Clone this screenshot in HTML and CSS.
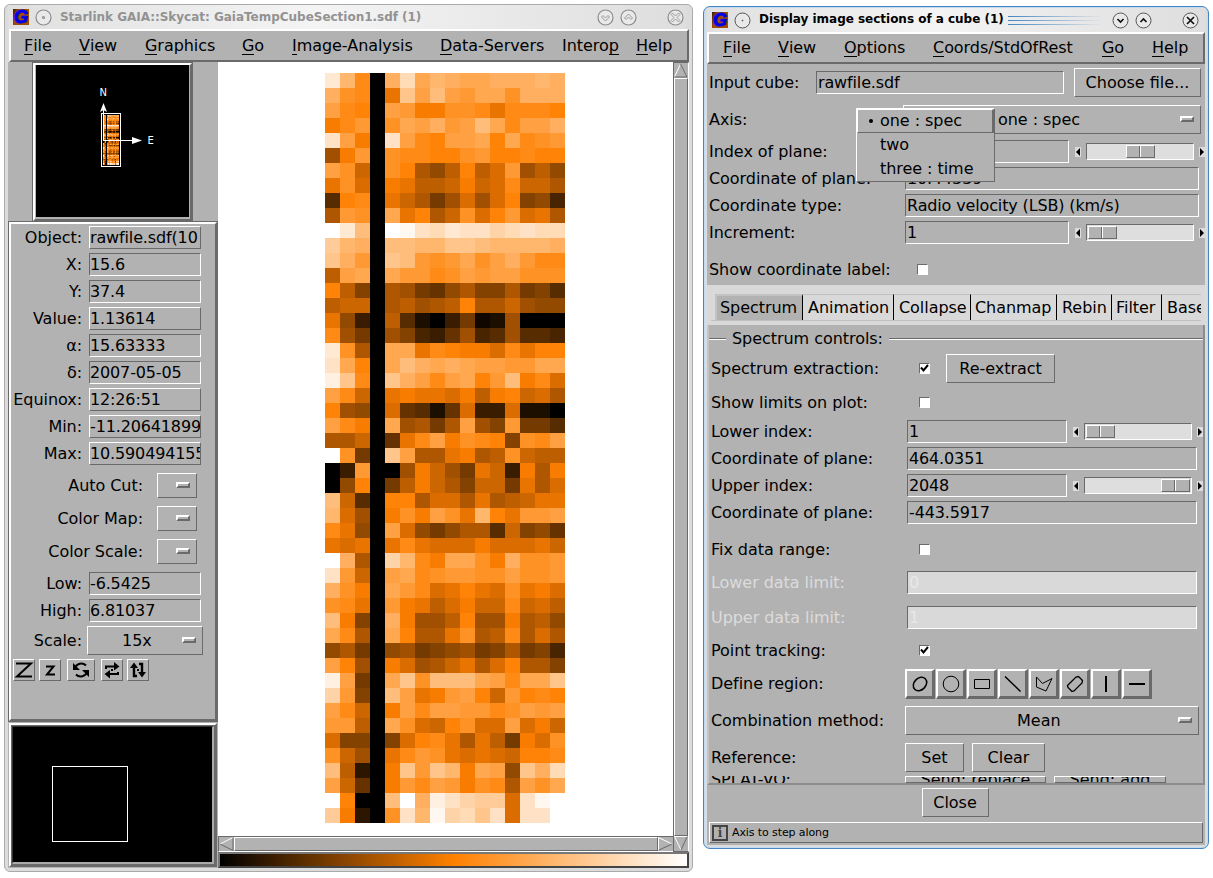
FILE: index.html
```html
<!DOCTYPE html>
<html lang="en">
<head>
<meta charset="utf-8">
<title>Starlink GAIA::Skycat</title>
<link rel="stylesheet" href="styles.css">
</head>
<body>
<section class="window main-window">
  <header class="titlebar">
    <span class="logo"><span>G</span></span>
    <svg class="knob" width="17" height="17" viewBox="0 0 17 17"><circle cx="8.5" cy="8.5" r="7.5"/><circle class="pin" cx="8.5" cy="8.5" r="1"/></svg>
    <h1>Starlink GAIA::Skycat: GaiaTempCubeSection1.sdf (1)</h1>
    <svg class="knob k1" width="17" height="17" viewBox="0 0 17 17"><circle cx="8.5" cy="8.5" r="7.5"/><path d="M4.5 8l4 4 4-4-1.500-1.500-2.500 2.500-2.500-2.500z"/></svg>
    <svg class="knob k2" width="17" height="17" viewBox="0 0 17 17"><circle cx="8.500" cy="8.500" r="7.500"/><path d="M4.500 9l4-4 4 4-1.500 1.500-2.500-2.500-2.500 2.500z"/></svg>
    <svg class="knob k3" width="17" height="17" viewBox="0 0 17 17"><circle cx="8.500" cy="8.500" r="7.500"/><path d="M4 5.500l1.500-1.500 3 3 3-3 1.500 1.500-3 3 3 3-1.500 1.500-3-3-3 3-1.500-1.500 3-3z"/></svg>
  </header>
  <nav class="menubar main-menu">
    <span><u>F</u>ile</span><span><u>V</u>iew</span><span><u>G</u>raphics</span><span><u>G</u>o</span><span><u>I</u>mage-Analysis</span><span><u>D</u>ata-Servers</span><span>Intero<u>p</u></span><span><u>H</u>elp</span>
  </nav>
  <div class="main-body">
    <aside class="side">
      <div class="pan-wrap">
        <div class="pan">
          <svg width="153" height="152" viewBox="0 0 153 152">
            <rect width="153" height="152" fill="#000"/>
            <svg id="thumb" x="67" y="50" width="16" height="50" viewBox="0 0 240 750" preserveAspectRatio="none"><use href="#cells"/></svg>
            <rect x="65.500" y="48.500" width="19" height="53" fill="none" stroke="#fff"/>
            <path d="M67.500 75.500V44M67.500 75.500H97" stroke="#fff" fill="none"/>
            <path d="M67.500 38l3.500 9-3.500-2-3.500 2zM96 72l10 3.500-10 3.500z" fill="#fff"/>
            <text x="63.500" y="31">N</text><text x="111.500" y="79">E</text>
          </svg>
        </div>
      </div>
      <div class="info">
        <div class="irow"><label>Object:</label><b class="raised">rawfile.sdf(10</b></div>
        <div class="irow"><label>X:</label><b>15.6</b></div>
        <div class="irow"><label>Y:</label><b>37.4</b></div>
        <div class="irow"><label>Value:</label><b class="raised">1.13614</b></div>
        <div class="irow"><label>α:</label><b>15.63333</b></div>
        <div class="irow"><label>δ:</label><b>2007-05-05</b></div>
        <div class="irow"><label>Equinox:</label><b class="raised">12:26:51</b></div>
        <div class="irow"><label>Min:</label><b class="raised">-11.20641899</b></div>
        <div class="irow"><label>Max:</label><b class="raised">10.590494155</b></div>
        <div class="crow first"><label>Auto Cut:</label><button class="mini"><i class="ind"></i></button></div>
        <div class="crow"><label>Color Map:</label><button class="mini"><i class="ind"></i></button></div>
        <div class="crow"><label>Color Scale:</label><button class="mini"><i class="ind"></i></button></div>
        <div class="irow low"><label>Low:</label><b>-6.5425</b></div>
        <div class="irow"><label>High:</label><b>6.81037</b></div>
        <div class="irow scale"><label>Scale:</label><button>15x<i class="ind"></i></button></div>
        <div class="tools">
          <button><svg width="20" height="20"><path d="M2 3.500h15L3 16.500h15" stroke-width="2"/></svg></button>
          <button><svg width="20" height="20"><path d="M6 6.500h7.500L7 14.500H15" stroke-width="2"/></svg></button>
          <button class="wide"><svg width="20" height="20"><path d="M4 8a6.500 6 0 0 1 11-2.500M16 12a6.500 6 0 0 1-11 2.500" stroke-width="2"/><path class="solid" d="M2 3v7h7zM18 17v-7h-7z"/></svg></button>
          <button><svg width="20" height="20"><path d="M3 6.500h10M7 14h10M4 6v3M16 12v3" stroke-width="2"/><path class="solid" d="M12 2l5.500 4.500-5.500 4zM8 10L2.500 14 8 18.500zM9 9h2v2H9z"/></svg></button>
          <button><svg width="20" height="20"><path d="M6 6v10H9M14 14V4H11" stroke-width="2.400"/><path class="solid" d="M2 8l4-5.500L10 8zM10 12l4 5.500 4-5.500zM9 9h2v2H9z"/></svg></button>
        </div>
      </div>
      <div class="zoomer"><div class="zoom-black"><div class="zoom-box"></div></div></div>
    </aside>
    <div class="viewer">
      <div class="canvas"><svg width="240" height="750" viewBox="0 0 240 750" shape-rendering="crispEdges"><g id="cells"></g></svg></div>
      <div class="vscroll">
        <svg width="14" height="15"><path class="lit" d="M.5 14L6.500 1"/><path class="dk" d="M6.500 1l6.500 13H.5"/></svg>
        <div class="bar"></div>
        <svg width="14" height="15"><path class="lit" d="M13 .5H.5L7 14"/><path class="dk" d="M7 14L13 1"/></svg>
      </div>
      <div class="hscroll">
        <svg width="15" height="14"><path class="lit" d="M1 7L14 .5"/><path class="dk" d="M14 .5v13L1 7"/></svg>
        <div class="bar"></div>
        <svg width="15" height="14"><path class="lit" d="M.5 13V.5L14 7"/><path class="dk" d="M14 7L1 13"/></svg>
      </div>
      <div class="ramp"></div>
    </div>
  </div>
</section>

<section class="window cube-window">
  <header class="titlebar">
    <span class="logo"><span>G</span></span>
    <svg class="knob" width="17" height="17" viewBox="0 0 17 17"><circle cx="8.500" cy="8.500" r="7.500"/><circle class="pin" cx="8.500" cy="8.500" r=".5"/></svg>
    <h1>Display image sections of a cube (1)</h1>
    <span class="stripes"></span>
    <svg class="knob k1" width="17" height="17" viewBox="0 0 17 17"><circle cx="8.500" cy="8.500" r="7.500"/><path d="M5.500 7l3 3 3-3"/></svg>
    <svg class="knob k2" width="17" height="17" viewBox="0 0 17 17"><circle cx="8.500" cy="8.500" r="7.500"/><path d="M5.500 10l3-3 3 3"/></svg>
    <svg class="knob k3" width="17" height="17" viewBox="0 0 17 17"><circle cx="8.500" cy="8.500" r="7.500"/><path d="M5 5l7 7M12 5l-7 7"/></svg>
  </header>
  <div class="client">
    <nav class="menubar cube-menu">
      <span><u>F</u>ile</span><span><u>V</u>iew</span><span><u>O</u>ptions</span><span><u>C</u>oords/StdOfRest</span><span><u>G</u>o</span><span><u>H</u>elp</span>
    </nav>
    <div class="form top">
      <div class="row h37"><label class="short">Input cube:</label><b class="file">rawfile.sdf</b><button class="choose">Choose file...</button></div>
      <div class="row h37"><label class="l194">Axis:</label><button class="axis">one : spec<i class="ind"></i></button></div>
      <div class="row"><label>Index of plane:</label><b class="num"></b><i class="arr left"></i><span class="slider"><i class="thumb mid"></i></span><i class="arr right"></i></div>
      <div class="row"><label>Coordinate of plane:</label><b class="full">10.44339</b></div>
      <div class="row"><label>Coordinate type:</label><b class="full">Radio velocity (LSB) (km/s)</b></div>
      <div class="row"><label>Increment:</label><b class="num">1</b><i class="arr left"></i><span class="slider"><i class="thumb"></i></span><i class="arr right"></i></div>
      <div class="row h39"><label>Show coordinate label:</label><i class="check"></i></div>
    </div>
    <div class="tabs">
      <div class="strip"><span class="on">Spectrum</span><span>Animation</span><span>Collapse</span><span>Chanmap</span><span>Rebin</span><span>Filter</span><span>Base</span></div>
    </div>
    <div class="form panel">
      <div class="legend"><i class="stub"></i><span>Spectrum controls:</span><i class="rule"></i></div>
      <div class="row h33"><label>Spectrum extraction:</label><i class="check"><svg width="9" height="9"><path d="M1 3.500l2.500 3L8 1"/></svg></i><button class="extract">Re-extract</button></div>
      <div class="row h33 limits"><label>Show limits on plot:</label><i class="check"></i></div>
      <div class="row"><label>Lower index:</label><b class="num">1</b><i class="arr left"></i><span class="slider"><i class="thumb"></i></span><i class="arr right"></i></div>
      <div class="row"><label>Coordinate of plane:</label><b class="full">464.0351</b></div>
      <div class="row"><label>Upper index:</label><b class="num">2048</b><i class="arr left"></i><span class="slider"><i class="thumb end"></i></span><i class="arr right"></i></div>
      <div class="row"><label>Coordinate of plane:</label><b class="full">-443.5917</b></div>
      <div class="row h39"><label>Fix data range:</label><i class="check"></i></div>
      <div class="row h35 off"><label>Lower data limit:</label><b class="full">0</b></div>
      <div class="row h35 off"><label>Upper data limit:</label><b class="full">1</b></div>
      <div class="row h31"><label>Point tracking:</label><i class="check"><svg width="9" height="9"><path d="M1 3.500l2.500 3L8 1"/></svg></i></div>
      <div class="row h36"><label class="l193">Define region:</label>
        <div class="shapes">
          <button><svg width="24" height="24"><ellipse cx="12" cy="12" rx="7.500" ry="5.800" transform="rotate(-45 12 12)" stroke-width="1.500"/></svg></button>
          <button><svg width="24" height="24"><circle cx="12" cy="12" r="7.800"/></svg></button>
          <button><svg width="24" height="24"><path d="M4.500 7.500h15v9h-15z"/></svg></button>
          <button><svg width="24" height="24"><path d="M4 4.500l15.500 15" stroke-width="1.500"/></svg></button>
          <button><svg width="24" height="24"><path d="M4.500 5l6 6.500L20 6.500 14 19l-9.500-4z"/></svg></button>
          <button><svg width="24" height="24"><path d="M4.500 13.500l8.500-8.500 2.500-.5 4 4-.5 2.500-8 8-2 .5-4-4z" stroke-width="1.300"/></svg></button>
          <button><svg width="24" height="24"><path d="M12 4v16" stroke-width="2"/></svg></button>
          <button><svg width="24" height="24"><path d="M4 12h16" stroke-width="2"/></svg></button>
        </div>
      </div>
      <div class="row h37"><label class="l194">Combination method:</label><button class="mean">Mean<i class="ind"></i></button></div>
      <div class="row h37"><label class="l194">Reference:</label><button class="set">Set</button><button class="clear">Clear</button></div>
      <div class="row squash"><label class="l194">SPLAT-VO:</label><button class="replace">Send: replace</button><button class="add">Send: add</button></div>
    </div>
    <div class="close-row"><button>Close</button></div>
    <div class="status"><span class="info-icon">i</span><span>Axis to step along</span></div>
  </div>
  <div class="popup"><div class="active"><i class="dot"></i>one : spec</div><div>two</div><div>three : time</div></div>
</section>
<script src="image.js"></script>
</body>
</html>
```
FILE: styles.css
```css
* { box-sizing: border-box; }
body { margin: 0; width: 1213px; height: 878px; overflow: hidden; position: relative; background: #fff; color: #000; font: 16px/20px "DejaVu Sans", sans-serif; }
b, i { font-weight: normal; font-style: normal; }
b { display: block; height: 23px; border: 1px solid #fff; border-top-color: #6a6a6a; border-left-color: #6a6a6a; padding: 0 1px; overflow: hidden; white-space: nowrap; line-height: 21px; letter-spacing: -.14px; }
b.raised { border-color: #fff #6a6a6a #6a6a6a #fff; }
button { font: inherit; color: inherit; background: #b2b2b2; border: 1px solid; border-color: #fff #6a6a6a #6a6a6a #fff; padding: 0; margin: 0; height: 29px; flex: none; display: flex; align-items: center; justify-content: center; white-space: nowrap; }
svg { display: block; flex: none; }
u { text-decoration: none; display: inline-block; height: 19px; border-bottom: 1px solid #000; }
label { letter-spacing: -.05px; }

.window { position: absolute; display: flex; flex-direction: column; background: #dcdcdc; }
.main-window { left: 4px; top: 4px; width: 689px; height: 868px; border: 1px solid #aaa; border-radius: 6px; padding: 0 3px 3px; }
.cube-window { left: 703px; top: 6px; width: 506px; height: 843px; border: 1px solid #4584bf; border-radius: 7px; padding: 0 3px 3px; box-shadow: inset 0 0 0 1px #c3dbf3; }
.titlebar { display: flex; align-items: center; flex: none; height: 25px; background: linear-gradient(90deg, #e0e0e0, #f4f4f4 45%, #dedede); }
.titlebar h1 { margin: 0; font-size: 12px; line-height: 20px; font-weight: bold; white-space: nowrap; letter-spacing: -.02px; }
.logo { width: 16px; height: 16px; background: linear-gradient(110deg, #301c10, #a04c05 30%); color: #0000e8; font: italic bold 18px/16px "Liberation Sans", sans-serif; flex: none; display: flex; align-items: center; justify-content: center; overflow: hidden; }
.logo span { -webkit-text-stroke: 1px #0000e8; }
.knob { fill: #e9e9e9; stroke: #555; stroke-width: 1.2; margin-left: 6px; }
.knob path { fill: none; stroke-width: 1.7; stroke: #111; }
.main-window .titlebar { padding-left: 5px; margin-right: 3px; height: 24px; }
.main-window .knob { stroke: #8d8d8d; }
.main-window .knob path { stroke: #999; stroke-width: 1; }
.main-window h1 { margin-left: 8px; color: #929292; width: 368px; }
.main-window .k1 { margin-left: 169px; }
.knob.k2 { margin-left: 6px; }
.knob.k3 { margin-left: 30px; }
.cube-window .titlebar { padding-left: 5px; height: 24px; margin-top: 1px; }
.cube-window h1 { margin-left: 8px; width: 249px; position: relative; top: -1px; }
.stripes { width: 94px; height: 9px; border-top: 1px solid #4584bf; border-bottom: 1px solid #4584bf; background: linear-gradient(#4584bf, #4584bf) 0 3px / 100% 1px no-repeat; mask-image: linear-gradient(90deg, #000, transparent); }
.cube-window .k1 { margin-left: 10px; }
.cube-window .knob { stroke-width: 1; }

.menubar { display: grid; align-items: center; height: 33px; flex: none; background: #b2b2b2; border: 2px solid; border-color: #fff #6a6a6a #6a6a6a #fff; white-space: nowrap; letter-spacing: -.05px; }
.main-menu { grid-template-columns: 55px 66px 97px 50px 148px 122px 74px 60px; padding-left: 13px; margin-left: 1px; }
.cube-menu { grid-template-columns: 55px 66px 89px 169px 50px 60px; padding-left: 14px; height: 32px; }

.main-body { display: flex; flex: 1; min-height: 0; }
.side { width: 210px; display: flex; flex-direction: column; background: #b2b2b2; flex: none; }
.pan-wrap { height: 160px; display: flex; padding: 1px 0 0 25px; }
.pan { width: 159px; height: 158px; background: #b2b2b2; border: 2px solid; border-color: #fff #6a6a6a #6a6a6a #fff; outline: 1px solid #6a6a6a; }
.pan svg { margin-left: 1px; }
.pan svg svg { margin: 0; }
.pan text { fill: #fff; font: 10px "DejaVu Sans", sans-serif; }
.info { height: 499px; border: 2px solid #fff; border-right-color: #6a6a6a; border-bottom-color: #6a6a6a; outline: 1px solid #6a6a6a; margin-left: 1px; margin-right: 1px; padding: 2px 0 0 2px; display: flex; flex-direction: column; flex: none; }
.irow { display: flex; height: 27px; align-items: flex-start; flex: none; }
.irow label { width: 69px; text-align: right; margin-right: 7px; line-height: 23px; white-space: nowrap; display: flex; justify-content: flex-end; }
.irow b { width: 112px; padding-left: 0; }
.crow { display: flex; height: 33px; flex: none; }
.crow label { width: 130px; text-align: right; line-height: 25px; margin-right: 14px; }
.crow.first { margin-top: 4px; height: 33px; }
.mini { width: 40px; height: 25px; justify-content: flex-end; padding-right: 6px; }
.ind { width: 14px; height: 6px; border: 2px solid; border-color: #fff #6a6a6a #6a6a6a #fff; background: #b2b2b2; flex: none; margin-bottom: 1px; }
.scale { height: 33px; }
.irow.scale label { line-height: 29px; margin-right: 5px; }
.scale button { width: 116px; justify-content: space-between; padding: 0 6px 0 34px; }
.tools { display: flex; }
.tools button { width: 22px; height: 22px; margin-right: 4px; }
.tools .wide { width: 28px; margin: 0 6px 0 2px; }
.tools path { fill: none; stroke: #000; }
.tools .solid { fill: #000; stroke: none; }
.zoomer { flex: 1; border: 2px solid #fff; border-right-color: #6a6a6a; border-bottom-color: #6a6a6a; margin: 2px 1px 1px; padding: 1px; background: #6a6a6a; }
.zoom-black { background: #000; height: 100%; border: 1px solid #333; border-right: 2px solid #aaa; border-bottom: 2px solid #aaa; padding: 39px 0 0 39px; }
.zoom-box { width: 76px; height: 76px; border: 1px solid #fff; }

.viewer { flex: 1; display: grid; grid-template: 774px 16px 1fr / 1fr 16px; }
.canvas { background: #fff; padding: 11px 0 0 107px; }
.vscroll { grid-row: span 2; background: #b2b2b2; border: 1px solid #6a6a6a; border-right-color: #fff; display: flex; flex-direction: column; }
.hscroll { grid-row: 2; grid-column: 1; border: 1px solid #6a6a6a; border-right: 0; border-bottom-color: #fff; background: #b2b2b2; display: flex; }
.vscroll .bar, .hscroll .bar { flex: 1; border: 1px solid; border-color: #fff #6a6a6a #6a6a6a #fff; }
.lit { stroke: #fff; fill: none; }
.dk { stroke: #6a6a6a; fill: none; }
.ramp { grid-column: span 2; border: 2px solid #777; border-bottom-color: #444; border-right-color: #444; background: linear-gradient(90deg, #000, #ff8000 50%, #fff); }

.client { background: #b2b2b2; flex: 1; display: flex; flex-direction: column; min-height: 0; }
.form { display: flex; flex-direction: column; flex: none; }
.top { padding-left: 2px; overflow: hidden; }
.row { display: flex; align-items: center; height: 27px; flex: none; white-space: nowrap; }
.row label { width: 196px; flex: none; }
.row .l194, .row .l193 { width: 194px; }
.h31 { height: 31px; } .h33 { height: 33px; } .h35 { height: 35px; } .h36 { height: 36px; } .h37 { height: 37px; }
.h39 { height: 39px; padding-top: 8px; }
.limits { padding-top: 2px; }
.row .short { width: 107px; }
.file { width: 248px; }
.choose { width: 127px; margin-left: 10px; }
.axis { width: 298px; padding: 0 6px 0 94px; justify-content: space-between; letter-spacing: -.05px; }
.num { width: 164px; }
.full { width: 294px; }
.panel .num { width: 160px; }
.panel .full { width: 290px; }
.arr { width: 6px; height: 10px; margin-left: 6px; background: #dcdcdc; flex: none; }
.arr::before { content: ""; display: block; width: 0; border: 4px solid transparent; border-left-width: 0; border-right: 4px solid #000; margin: 1px 0 0 1px; }
.arr.right::before { border-right-width: 0; border-left: 4px solid #000; }
.arr.right { margin-left: 5px; }
.slider { width: 108px; height: 17px; margin-left: 5px; background: #dedede; border: 1px solid; border-color: #6a6a6a #fff #fff #6a6a6a; padding: 1px; flex: none; }
.thumb { display: block; width: 29px; height: 13px; background: linear-gradient(90deg, transparent 12px, #6a6a6a 12px 13px, #fff 13px 14px, transparent 14px) #b2b2b2; border: 1px solid; border-color: #fff #6a6a6a #6a6a6a #fff; }
.thumb.mid { margin-left: 38px; }
.thumb.end { margin-left: 75px; }
.check { width: 11px; height: 11px; margin-left: 12px; background: #fff; border: 1px solid; border-color: #6a6a6a #fff #fff #6a6a6a; }
.check path { stroke: #000; stroke-width: 2; fill: none; }
.tabs { height: 40px; flex: none; background: #d9d9d9; padding: 9px 4px 0 4px; }
.strip { display: flex; height: 27px; padding-left: 4px; overflow: hidden; border-bottom: 1px solid #c0c0c0; letter-spacing: -.05px; }
.strip span { border-right: 1px solid #000; border-top: 1px solid #c0c0c0; height: 26px; line-height: 26px; padding-left: 5px; flex: none; width: 91px; }
.strip .on { background: #b2b2b2; border: 2px solid #c3c3c3; border-width: 2px 1px 0 2px; border-right-color: #000; width: 88px; line-height: 24px; padding-left: 3px; }
.strip span:nth-child(3) { width: 77px; }
.strip span:nth-child(4) { width: 86px; padding-left: 4px; }
.strip span:nth-child(5) { width: 55px; }
.strip span:nth-child(6) { width: 50px; padding-left: 4px; }
.strip span:nth-child(7) { border-right: 0; }
.panel { border-left: 2px solid #c3c3c3; border-right: 2px solid #8c8c8c; border-bottom: 2px solid #8c8c8c; padding-left: 2px; height: 460px; }
.legend { display: flex; align-items: center; height: 27px; margin-left: -2px; letter-spacing: -.05px; }
.legend i { height: 2px; border-top: 1px solid #6a6a6a; background: #fff; }
.legend span { padding: 0 6px; }
.stub { width: 17px; }
.rule { flex: 1; }
.extract { width: 109px; margin-left: 16px; letter-spacing: -.05px; }
.off { color: #dcdcdc; }
.off b { background: #d9d9d9; color: #e8e8e8; }
.shapes { display: flex; gap: 1px; }
.shapes button { width: 30px; height: 30px; border-width: 2px 3px 3px 2px; }
.shapes svg { stroke: #000; fill: none; }
.mean { width: 294px; padding: 0 6px 0 111px; justify-content: space-between; }
.set { width: 59px; }
.clear { width: 73px; margin-left: 8px; }
.squash { height: 7px; overflow: hidden; }
.squash button { height: 7px; overflow: hidden; }
.replace { width: 141px; }
.add { width: 112px; margin-left: 8px; }
.close-row { height: 35px; display: flex; align-items: center; justify-content: center; flex: none; padding-right: 2px; }
.close-row button { width: 67px; }
.status { margin: 2px; height: 21px; border: 1px solid; border-color: #fff #6a6a6a #6a6a6a #fff; display: flex; align-items: center; font-size: 11px; padding-left: 2px; flex: none; letter-spacing: -.1px; }
.info-icon { width: 16px; height: 16px; border: 2px solid #444; color: #444; font: bold 12px/12px "DejaVu Serif", serif; text-align: center; margin-right: 4px; }
.popup { position: absolute; left: 152px; top: 101px; width: 139px; height: 74px; background: #b2b2b2; border: 1px solid; border-color: #fff #6a6a6a #6a6a6a #fff; letter-spacing: -.05px; }
.popup div { height: 24px; line-height: 24px; padding-left: 23px; }
.popup .active { border: 1px solid; border-color: #fff #6a6a6a #6a6a6a #fff; border-right-width: 2px; display: flex; align-items: center; padding-left: 11px; }
.dot { width: 4px; height: 4px; border-radius: 2px; background: #000; margin-right: 7px; }
```
FILE: image.js
```js
// One character per pixel, base 36: 0 is black, the middle is orange, z is white.
const rows = `wpj0ounponnooopo okj0grmqmlnnkooo mji0mlhhkkjgjjji hjl0knmolmqnjmmo vmh0vmjimmninjkl
bhl0kjjiikliijii mke0kicadidflbda gkf0hgddehefjeec 6ij0gec8bfbfi9a5 clk0ngicekfilfgc
zwq0zyvuwvvtuvuu spo0qqpprrqppppo rol0rqlklnkmoljj dmn0nlljkmlmmkkk id90cb87ac99c896
dee0cdbcdiccebaa ga40d6204812b000 jb80b9547b56b665 wkc0nngjihhfjgii vni0nqononmmllnn
xrj0romjmnilqhjf mje0ghggfhdhiefc iba0f7627f44f220 mjh0nbc8cmb9l886 cce07gjmhkji9kjm
zk80rmccghcdkedd 04l00bheb8ge4hch 0ai08dhec9ee8gcf qe60iicffcgcdegg pfb0hkhmkgpigllm
jga0mfa8acc6e9a7 gfg0gjgfffhfffge zoc0tpjhnnkhokkl vle0mnjkllkkmkkl okh0nljfgigfkghf
kjg0lhgdfheejefd qh90ohbbdibbhcda njc0niccgkcdjcfc ac80ab89ab89c895 mib0hfbcegcficc9
xm80nrkqqqnmjnnr tl90qmghlmieliji mje0hmjmmlljkmlm lld0nkfeikffmfhe f9909fijgcgd8hfk
keb0gjlkgfgfeiij qd30hrlrphnmarou me70hljmlhkjcmkn zi00qzoxvtssfvyz sh30kvpyturvfvvz`
  .split(/\s+/);

const cells = document.getElementById('cells');
rows.forEach((row, y) => {
  [...row].forEach((ch, x) => {
    const t = parseInt(ch, 36) / 35;
    const r = Math.min(255, Math.round(510 * t));
    const g = Math.round(255 * t);
    const b = Math.max(0, Math.round(510 * t - 255));
    const cell = document.createElementNS('http://www.w3.org/2000/svg', 'rect');
    cell.setAttribute('x', x * 15);
    cell.setAttribute('y', y * 15);
    cell.setAttribute('width', 15);
    cell.setAttribute('height', 15);
    cell.setAttribute('fill', `rgb(${r},${g},${b})`);
    cells.appendChild(cell);
  });
});
```
